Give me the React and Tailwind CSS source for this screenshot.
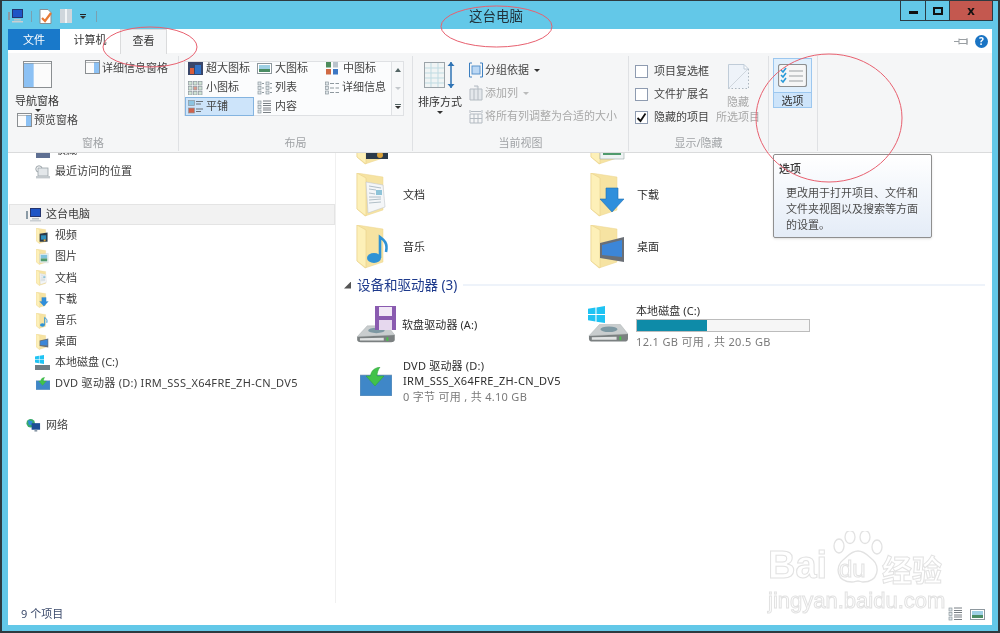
import React from "react";

const FONT = '"Noto Sans", "Noto Sans CJK SC", sans-serif';

function Overlay({ kind }) {
  if (kind === "doc")
    return (
      <g>
        <polygon points="10,9 27,12 29,34 12,40" fill="#f4f6f8" stroke="#c3c8cc" strokeWidth="0.6" />
        <path d="M13 13l12 2M13 16l7 1M13 20l6 1M13 24l12 0M13 27l12-1M13 30l12-1" stroke="#9fb0ba" strokeWidth="0.8" />
        <rect x="20" y="17" width="6" height="5" fill="#8ec3d8" />
      </g>
    );
  if (kind === "download")
    return <polygon points="16,15 28,15 28,26 34,26 22,39 10,26 16,26" fill="#2f8fdc" stroke="#1d6fb4" strokeWidth="0.6" />;
  if (kind === "music")
    return (
      <g>
        <ellipse cx="18" cy="33" rx="7" ry="5" fill="#2f93d5" />
        <path d="M24 33V12c4 3 8 6 6 15" fill="none" stroke="#2f93d5" strokeWidth="2.6" />
      </g>
    );
  if (kind === "desktop")
    return (
      <g>
        <polygon points="10,18 34,12 34,37 10,33" fill="#6a6f76" />
        <polygon points="12,20 32,15 32,32 12,30" fill="#3c86d8" />
      </g>
    );
  if (kind === "video")
    return (
      <g>
        <polygon points="10,16 32,12 32,38 10,38" fill="#2b3a4a" />
        <rect x="14" y="20" width="14" height="12" fill="#2e8fbe" />
        <circle cx="24" cy="34" r="3" fill="#d9a13a" />
      </g>
    );
  if (kind === "picture")
    return (
      <g>
        <polygon points="10,14 34,12 34,38 10,38" fill="#eef3f3" stroke="#9aa7a9" strokeWidth="0.6" />
        <rect x="13" y="16" width="18" height="10" fill="#7fc2dc" />
        <rect x="13" y="26" width="18" height="8" fill="#4f9a6c" />
      </g>
    );
  return null;
}

function Folder({ kind, w = 36, h = 44 }) {
  return (
    <svg width={w} height={h} viewBox="0 0 36 44" className="shrink-0">
      <polygon points="1,0 27,4 27,37 9,43 1,36" fill="#f6e3a2" stroke="#ecd48e" strokeWidth="0.5" />
      <polygon points="1,0 10,5 10,43 1,36" fill="#fdf0b8" stroke="#e9d08a" strokeWidth="0.6" />
      <Overlay kind={kind} />
    </svg>
  );
}

function PcIcon() {
  return (
    <svg width="16" height="14" viewBox="0 0 16 14" className="shrink-0">
      <rect x="0" y="3" width="2" height="8" fill="#8a9aa5" />
      <rect x="4" y="0" width="11" height="9" fill="#24346e" />
      <rect x="5" y="1" width="9" height="7" fill="#1f55c6" />
      <rect x="6" y="10" width="7" height="1.5" fill="#b9c1c8" />
      <rect x="4" y="12" width="11" height="1.5" fill="#c9ced2" />
    </svg>
  );
}

function RecentIcon() {
  return (
    <svg width="16" height="14" viewBox="0 0 16 14" className="shrink-0">
      <circle cx="4" cy="4" r="3.2" fill="#fff" stroke="#9aa3a8" />
      <rect x="3" y="3" width="10" height="8" fill="#e3e7ea" stroke="#9aa3a8" strokeWidth="0.8" />
      <rect x="1" y="11" width="14" height="2.4" fill="#c3c9cd" />
    </svg>
  );
}

function WinLogo({ s = 16 }) {
  return (
    <svg width={s} height={s} viewBox="0 0 16 16" className="shrink-0">
      <polygon points="0,2.5 7,1.5 7,7.5 0,7.5" fill="#1fc3f3" />
      <polygon points="8,1.3 16,0 16,7.5 8,7.5" fill="#1fc3f3" />
      <polygon points="0,8.5 7,8.5 7,14.5 0,13.5" fill="#1fc3f3" />
      <polygon points="8,8.5 16,8.5 16,16 8,14.8" fill="#1fc3f3" />
    </svg>
  );
}

function Hdd({ w = 42, h = 24 }) {
  return (
    <svg width={w} height={h} viewBox="0 0 42 24" className="shrink-0">
      <polygon points="12,2 34,2 42,12 1,14" fill="#c9cdce" stroke="#a8aeaf" strokeWidth="0.5" />
      <ellipse cx="22" cy="7" rx="9" ry="3" fill="#7d98a2" />
      <path d="M1 14l41-2v5q0 3-4 3H5q-4 0-4-3z" fill="#7b8081" />
      <path d="M4 15.5l26-.5v3H4z" fill="#e1e3e3" />
      <rect x="33" y="14.5" width="2" height="4" fill="#49c04a" />
    </svg>
  );
}

function DvdIcon({ w = 32, h = 29 }) {
  return (
    <svg width={w} height={h} viewBox="0 0 32 29" className="shrink-0">
      <rect x="0" y="8" width="32" height="21" fill="#3f87c8" stroke="#8ba0b2" strokeWidth="0.6" />
      <path d="M20 0c-6 1-9 4-9.500 9H6l9 10 9-10h-7c0-3 1-6 3-9z" fill="#41c24a" stroke="#2f9e3a" strokeWidth="0.5" />
    </svg>
  );
}

function Pane({ side = "left", w = 15, h = 14 }) {
  const blue = side === "left" ? { x: 1, width: w / 3 } : { x: w - 1 - w / 3, width: w / 3 };
  return (
    <svg width={w} height={h} viewBox={`0 0 ${w} ${h}`} className="shrink-0">
      <rect x="0.500" y="0.500" width={w - 1} height={h - 1} fill="#fbfbfb" stroke="#8a8e91" />
      <rect x={blue.x} y="2" width={blue.width} height={h - 3} fill="#8cc1f4" />
      <line x1="1" y1="2.500" x2={w - 1} y2="2.500" stroke="#8a8e91" strokeWidth="0.6" />
    </svg>
  );
}

function ViewGlyph({ k }) {
  const g = "#8e989e";
  if (k === "xl")
    return (
      <svg width="15" height="13" viewBox="0 0 15 13"><rect width="15" height="13" fill="#39466a" /><rect x="2" y="6" width="4" height="6" fill="#d95d3a" /><rect x="7" y="3" width="6" height="9" fill="#3172c6" /></svg>
    );
  if (k === "l" || k === "tile-pic")
    return (
      <svg width="15" height="13" viewBox="0 0 15 13"><rect x="0.500" y="1.500" width="14" height="10" fill="#fff" stroke={g} /><rect x="2" y="3" width="11" height="4" fill="#9ed0e4" /><rect x="2" y="7" width="11" height="3" fill="#4a8c63" /></svg>
    );
  if (k === "m")
    return (
      <svg width="15" height="13" viewBox="0 0 15 13"><rect x="1" y="0" width="5" height="5.500" fill="#4d8c5c" /><rect x="8" y="0" width="5" height="5.500" fill="#b9c3cc" /><rect x="1" y="7" width="5" height="5.500" fill="#d06a44" /><rect x="8" y="7" width="5" height="5.500" fill="#3d78c4" /></svg>
    );
  if (k === "s")
    return (
      <svg width="15" height="14" viewBox="0 0 15 14">
        {[0, 5, 10].map((y) => [0, 5, 10].map((x) => (
          <rect key={`${x}${y}`} x={x + 0.5} y={y + 0.5} width="3.500" height="3.500" fill={x === 5 && y === 5 ? "#dc9a8c" : "#cfe2d4"} stroke={g} strokeWidth="0.7" />
        )))}
      </svg>
    );
  if (k === "list")
    return (
      <svg width="15" height="14" viewBox="0 0 15 14">
        {[1, 5.5, 10].map((y) => (
          <g key={y}><rect x="1" y={y} width="3" height="3" fill="#dfe6ea" stroke={g} strokeWidth="0.7" /><rect x="9" y={y} width="3" height="3" fill="#dfe6ea" stroke={g} strokeWidth="0.7" /><rect x="5" y={y + 1} width="2" height="1" fill={g} /><rect x="13" y={y + 1} width="2" height="1" fill={g} /></g>
        ))}
      </svg>
    );
  if (k === "detail")
    return (
      <svg width="14" height="14" viewBox="0 0 14 14">
        {[1, 5.5, 10].map((y) => (
          <g key={y}><rect x="0.500" y={y} width="3" height="3" fill="#dfe6ea" stroke={g} strokeWidth="0.7" /><rect x="5" y={y + 1} width="4" height="1" fill={g} /><rect x="10.500" y={y + 1} width="3.500" height="1" fill={g} /></g>
        ))}
      </svg>
    );
  if (k === "tile")
    return (
      <svg width="15" height="14" viewBox="0 0 15 14"><rect x="0.500" y="0.500" width="6" height="5" fill="#8bc3e0" stroke={g} strokeWidth="0.7" /><rect x="0.500" y="8" width="6" height="5" fill="#d0624c" stroke={g} strokeWidth="0.7" /><path d="M8 1.500h7M8 4h5M8 9h7M8 11.500h5" stroke="#6a7176" /></svg>
    );
  return (
    <svg width="15" height="14" viewBox="0 0 15 14">
      {[1, 5.5, 10].map((y) => (
        <g key={y}><rect x="1" y={y} width="3" height="3" fill="#dfe6ea" stroke={g} strokeWidth="0.7" /><path d={`M6 ${y}h8M6 ${y + 2.5}h8`} stroke="#6a7176" strokeWidth="0.9" /></g>
      ))}
    </svg>
  );
}

function GalleryItem({ k, label, sel }) {
  return (
    <div className={`h-[19px] flex items-center gap-[3px] pl-[2px] border ${sel ? "bg-[#cde4fa] border-[#84b4e0]" : "border-transparent"}`}>
      <ViewGlyph k={k} />
      <span className="whitespace-nowrap">{label}</span>
    </div>
  );
}

function Group({ w, label, children }) {
  return (
    <div className={`${w} shrink-0 flex flex-col border-r border-[#dfe1e4] mb-[1px]`}>
      <div className="flex-1 flex min-h-0">{children}</div>
      <div className="h-[16px] text-center text-[#a0a3a6] leading-[16px]">{label}</div>
    </div>
  );
}

function Check({ checked }) {
  return (
    <span className="w-[13px] h-[13px] border border-[#8e9bb0] bg-white shrink-0 flex items-center justify-center">
      {checked && (
        <svg width="11" height="11" viewBox="0 0 11 11"><path d="M1.500 6l3 3 5-7.500" fill="none" stroke="#111" strokeWidth="1.800" /></svg>
      )}
    </span>
  );
}

function Caret({ className = "" }) {
  return <span className={`w-0 h-0 border-x-[3px] border-x-transparent border-t-[3px] border-t-[#333] ${className}`} />;
}

function Ribbon() {
  return (
    <div className="h-[100px] bg-[#f5f6f7] border-b border-[#dadbdc] flex text-[#444] text-[11px] pt-[3px] shrink-0">
      <Group w="w-[171px]" label="窗格">
        <div className="w-[77px] pl-[7px]">
          <div className="ml-[8px] mt-[5px]"><Pane side="left" w={29} h={27} /></div>
          <div className="mt-[6px] leading-[14px] text-[#333]">导航窗格</div>
          <div className="h-[3px] flex justify-center w-[45px]"><Caret className="mt-[1px]" /></div>
          <div className="flex items-center gap-[2px] ml-[2px] mt-[1px] h-[16px]"><Pane side="right" /><span className="whitespace-nowrap">预览窗格</span></div>
        </div>
        <div className="flex items-start gap-[2px] mt-[4px] h-[16px]"><Pane side="right" /><span className="whitespace-nowrap leading-[15px]">详细信息窗格</span></div>
      </Group>
      <Group w="w-[234px]" label="布局">
        <div className="ml-[5px] mt-[5px] h-[55px] flex border border-[#dfe1e4] bg-[#fbfcfd] w-[220px]">
          <div className="grid grid-cols-[69px_68px_auto] grid-rows-[19px_19px_19px] -mt-[3px]">
            <GalleryItem k="xl" label="超大图标" />
            <GalleryItem k="l" label="大图标" />
            <GalleryItem k="m" label="中图标" />
            <GalleryItem k="s" label="小图标" />
            <GalleryItem k="list" label="列表" />
            <GalleryItem k="detail" label="详细信息" />
            <GalleryItem k="tile" label="平铺" sel />
            <GalleryItem k="content" label="内容" />
          </div>
          <div className="ml-auto w-[12px] border-l border-[#dfe1e4] flex flex-col items-center justify-between py-[6px] bg-[#f7f8f9]">
            <span className="w-0 h-0 border-x-[3px] border-x-transparent border-b-[4px] border-b-[#566]" />
            <span className="w-0 h-0 border-x-[3px] border-x-transparent border-t-[3px] border-t-[#c4c8cc]" />
            <span className="flex flex-col items-center gap-[1px]"><span className="w-[6px] h-px bg-[#566]" /><Caret /></span>
          </div>
        </div>
      </Group>
      <Group w="w-[216px]" label="当前视图">
        <div className="w-[50px] ml-[2px] flex flex-col items-center">
          <svg width="32" height="29" viewBox="0 0 32 29" className="mt-[5px] shrink-0">
            <rect x="0.500" y="1.500" width="20" height="25" fill="#f0f4f4" stroke="#9ba3a8" />
            <path d="M1 7h19M1 12h19M1 17h19M1 22h19M7 2v24M14 2v24" stroke="#bfdbe2" />
            <path d="M27 1v26" stroke="#2f74b5" strokeWidth="1.500" />
            <path d="M23.500 5L27 1l3.500 4zM23.500 23l3.500 4 3.500-4z" fill="#2f74b5" />
          </svg>
          <div className="mt-[5px] leading-[14px] text-[#333] whitespace-nowrap">排序方式</div>
          <Caret className="mt-[2px]" />
        </div>
        <div className="ml-[4px] mt-[5px] flex flex-col gap-[5px]">
          <div className="h-[18px] flex items-center gap-[2px]">
            <svg width="14" height="16" viewBox="0 0 14 16" className="shrink-0"><path d="M3 1H.500v14H3M11 1h2.500v14H11" fill="none" stroke="#3c7fc0" /><rect x="3" y="4" width="8" height="8" fill="#bcd8f4" stroke="#5b93cc" /></svg>
            <span>分组依据</span>
            <Caret className="ml-[3px]" />
          </div>
          <div className="h-[18px] flex items-center gap-[2px] text-[#a8a8a8]">
            <svg width="14" height="16" viewBox="0 0 14 16" className="shrink-0"><path d="M1 4h12v11H1zM5 4v11M9 4v11M5 1h4v3" fill="#e4e8ec" stroke="#b4bbc2" /></svg>
            <span>添加列</span>
            <Caret className="ml-[3px] opacity-30" />
          </div>
          <div className="h-[18px] flex items-center gap-[2px] text-[#a8a8a8]">
            <svg width="14" height="15" viewBox="0 0 14 15" className="shrink-0"><path d="M1 5h12v9H1zM5 5v9M9 5v9M1 9.500h12M1 1v3M13 1v3M2 2.500h10" fill="none" stroke="#b4bbc2" /></svg>
            <span className="whitespace-nowrap">将所有列调整为合适的大小</span>
          </div>
        </div>
      </Group>
      <Group w="w-[140px]" label="显示/隐藏">
        <div className="w-[87px] pl-[6px] pt-[7px] flex flex-col gap-[6px] shrink-0">
          {[["项目复选框"], ["文件扩展名"], ["隐藏的项目", true]].map(([t, c]) => (
            <div key={t} className="h-[17px] flex items-center gap-[6px] whitespace-nowrap"><Check checked={c} /><span>{t}</span></div>
          ))}
        </div>
        <div className="w-[44px] flex flex-col items-center text-[#a8a8a8]">
          <svg width="21" height="25" viewBox="0 0 21 25" className="mt-[8px] shrink-0">
            <path d="M.500 24.500V.500H16l4.500 4.500v19.500z" fill="#eef3f9" />
            <path d="M.500 24.500V.500H16" fill="none" stroke="#c0ccd8" />
            <path d="M20.500 5v19.500H.500" fill="none" stroke="#aab4be" strokeDasharray="1.500 2" />
            <path d="M20 5L1 24" stroke="#cfd6dd" />
            <path d="M16 .500V5h4.500z" fill="#fff" stroke="#c0ccd8" />
          </svg>
          <div className="leading-[14px] mt-[6px]">隐藏</div>
          <div className="leading-[14px] mt-[1px] whitespace-nowrap">所选项目</div>
        </div>
      </Group>
      <Group w="w-[49px]" label="">
        <div className="ml-[4px] mt-[2px] w-[39px] h-[50px] flex flex-col">
          <div className="h-[35px] bg-[#e0effc] border border-[#9cc7ef] flex items-center justify-center">
            <svg width="29" height="23" viewBox="0 0 29 23"><rect x="0.500" y="0.500" width="28" height="22" rx="2" fill="#f6f6f6" stroke="#8d8f90" strokeWidth="1.200" /><path d="M11 7h14M11 12h14M11 17h14" stroke="#9a9fa2" /><path d="M3 6l2 2 3-4M3 11l2 2 3-4M3 16l2 2 3-4" fill="none" stroke="#2a9ad8" strokeWidth="1.600" /></svg>
          </div>
          <div className="h-[16px] -mt-px bg-[#cde4fa] border border-[#9cc7ef] text-center leading-[15px] text-[#333]">选项</div>
        </div>
      </Group>
    </div>
  );
}

function SideRow({ icon, children, child, sel, h = "h-[21px]" }) {
  return (
    <div className={`${h} flex items-center shrink-0 ${child ? "pl-[27px]" : sel ? "pl-[16px]" : "pl-[18px]"} gap-[5px] whitespace-nowrap ${sel ? "bg-[#f2f2f2] border border-[#e4e4e4] ml-px" : ""}`}>
      <span className="w-[15px] flex justify-center">{icon}</span>
      <span>{children}</span>
    </div>
  );
}

function Sidebar() {
  const f = (k) => <Folder kind={k} w={13} h={16} />;
  return (
    <div className="w-[328px] shrink-0 border-r border-[#f0f0f0] overflow-hidden flex flex-col text-[11px] text-[#3d3d3d]">
      <div className="-mt-[13px]">
        <SideRow child icon={<span className="w-[14px] h-[14px] bg-[#5e6f92] block" />}>收藏</SideRow>
      </div>
      <SideRow child icon={<RecentIcon />}>最近访问的位置</SideRow>
      <div className="h-[22px] shrink-0" />
      <SideRow sel icon={<PcIcon />}>这台电脑</SideRow>
      <SideRow child icon={f("video")}>视频</SideRow>
      <SideRow child icon={f("picture")}>图片</SideRow>
      <SideRow child h="h-[22px]" icon={f("doc")}>文档</SideRow>
      <SideRow child icon={f("download")}>下载</SideRow>
      <SideRow child icon={f("music")}>音乐</SideRow>
      <SideRow child icon={f("desktop")}>桌面</SideRow>
      <SideRow child icon={<span className="relative block w-[15px] h-[15px]"><WinLogo s={9} /><span className="absolute left-0 bottom-0 w-[15px] h-[5px] bg-[#6f7d84] block" /></span>}>本地磁盘 (C:)</SideRow>
      <SideRow child icon={<DvdIcon w={14} h={13} />}><span className="tracking-[0.3px]">DVD 驱动器 (D:) IRM_SSS_X64FRE_ZH-CN_DV5</span></SideRow>
      <div className="h-[21px] shrink-0" />
      <SideRow icon={
        <svg width="16" height="15" viewBox="0 0 16 15"><circle cx="5" cy="5" r="4.500" fill="#39a96b" /><path d="M2 2l5 1-1 4-3 0z" fill="#2b8ed8" /><rect x="6" y="5" width="9" height="7" fill="#1d4f96" /><rect x="9" y="12" width="3" height="2" fill="#8a98a6" /></svg>
      }>网络</SideRow>
    </div>
  );
}

function FolderCell({ kind, label }) {
  return (
    <div className="w-[234px] h-[52px] shrink-0 flex items-center">
      <span className="w-[47px] flex"><Folder kind={kind} /></span>
      <span className="text-[11px] text-[#2e2e2e]">{label}</span>
    </div>
  );
}

function Main() {
  return (
    <div className="flex-1 min-w-0 overflow-hidden pl-[8px] text-[11px] text-[#333]">
      <div className="pl-[12px] -mt-[36px]">
        <div className="flex"><FolderCell kind="video" label="视频" /><FolderCell kind="picture" label="图片" /></div>
        <div className="flex"><FolderCell kind="doc" label="文档" /><FolderCell kind="download" label="下载" /></div>
        <div className="flex"><FolderCell kind="music" label="音乐" /><FolderCell kind="desktop" label="桌面" /></div>
      </div>
      <div className="h-[20px] mt-[2px] flex items-center">
        <span className="w-[7px] h-[7px] [clip-path:polygon(100%_0,100%_100%,0_100%)] bg-[#555] mr-[6px] shrink-0" />
        <span className="text-[13.5px] text-[#1e3a8c] whitespace-nowrap leading-[20px]">设备和驱动器 (3)</span>
        <span className="flex-1 h-[2px] bg-[#eef3fa] ml-[6px] mr-[7px]" />
      </div>
      <div className="pl-[10px] mt-[6px] flex h-[49px]">
        <div className="w-[234px] shrink-0 flex items-center">
          <span className="w-[48px] relative h-[40px] block">
            <span className="absolute left-[0px] bottom-[0px]"><Hdd w={43} h={22} /></span>
            <svg width="21" height="24" viewBox="0 0 21 24" className="absolute left-[21px] top-0"><rect width="21" height="24" fill="#8a5bb0" /><rect x="4" y="1" width="13" height="9" fill="#f1e8f6" /><rect x="4" y="14" width="13" height="10" fill="#e6d8ee" /></svg>
          </span>
          <span className="text-[#2e2e2e] tracking-[0.1px]">软盘驱动器 (A:)</span>
        </div>
        <div className="flex items-center">
          <span className="w-[47px] relative h-[40px] block">
            <span className="absolute left-0 top-0"><WinLogo s={17} /></span>
            <span className="absolute left-0 bottom-0"><Hdd w={40} h={24} /></span>
          </span>
          <div className="flex flex-col ml-px mt-[2px]">
            <span className="leading-[15px] text-[#2e2e2e] tracking-[0.1px]">本地磁盘 (C:)</span>
            <div className="w-[174px] h-[13px] mt-[1px] border border-[#bcbcbc] bg-[#f6f6f6]"><div className="h-full bg-[#0e8ba8] w-[70px]" /></div>
            <span className="leading-[17px] mt-[1px] text-[#7a7a7a] whitespace-nowrap tracking-[0.35px]">12.1 GB 可用 , 共 20.5 GB</span>
          </div>
        </div>
      </div>
      <div className="pl-[16px] mt-[6px] flex items-center h-[50px]">
        <span className="w-[42px] flex"><DvdIcon /></span>
        <div className="flex flex-col leading-[15.5px] ml-px">
          <span className="text-[#2e2e2e] tracking-[0.2px]">DVD 驱动器 (D:)</span>
          <span className="text-[#2e2e2e] tracking-[0.33px]">IRM_SSS_X64FRE_ZH-CN_DV5</span>
          <span className="text-[#7a7a7a] tracking-[0.3px]">0 字节 可用 , 共 4.10 GB</span>
        </div>
      </div>
    </div>
  );
}

function Watermark() {
  const stroke = "text-white [-webkit-text-stroke:1px_#e2e2e2]";
  return (
    <div className="absolute left-[766px] top-[530px] w-[190px] h-[82px] pointer-events-none">
      <span className={`absolute left-0 top-[12px] text-[38px] leading-[44px] font-bold ${stroke}`} style={{ fontFamily: '"Liberation Sans", sans-serif' }}>Bai</span>
      <svg width="60" height="56" viewBox="0 0 60 56" className="absolute left-[62px] top-0">
        <g fill="#fff" stroke="#e2e2e2" strokeWidth="1.300">
          <ellipse cx="9" cy="15" rx="5" ry="7" />
          <ellipse cx="20" cy="6" rx="5" ry="6.500" />
          <ellipse cx="35" cy="6" rx="5" ry="6.500" />
          <ellipse cx="47" cy="16" rx="5" ry="7" />
          <path d="M28 20c7 0 10 5 15 9 7 6 6 22-10 22-2 0-3-1-5-1s-3 1-6 1C6 51 5 35 13 29c5-4 8-9 15-9z" />
        </g>
      </svg>
      <span className={`absolute left-[71px] top-[25px] text-[24px] leading-[26px] ${stroke}`} style={{ fontFamily: '"Liberation Sans", sans-serif' }}>du</span>
      <span className={`absolute left-[114px] top-[22px] text-[30px] leading-[34px] font-bold ${stroke}`}>经验</span>
      <span className={`absolute left-0 top-[57px] text-[22px] leading-[26px] whitespace-nowrap ${stroke}`} style={{ fontFamily: '"Liberation Sans", sans-serif' }}>jingyan.baidu.com</span>
    </div>
  );
}

export default function App() {
  return (
    <div className="relative w-[1000px] h-[633px] overflow-hidden flex flex-col border-t border-x-2 border-b-2 border-[#2e3a40] bg-[#63c8e8] px-[6px] pb-[6px] blur-[0.4px]" style={{ fontFamily: FONT }}>
      <div className="h-[28px] shrink-0 grid grid-cols-3 items-start">
        <div className="flex items-center gap-[7px] h-[26px] mt-[2px]">
          <PcIcon />
          <span className="w-px h-[11px] bg-[#7aa0b0]" />
          <svg width="14" height="15" viewBox="0 0 14 15"><path d="M1 .500h8l3 3v11H1z" fill="#fff" stroke="#8a8f92" /><path d="M3 9l3 3 6-8" fill="none" stroke="#e87a35" strokeWidth="2.200" /></svg>
          <svg width="12" height="14" viewBox="0 0 12 14"><rect x="0" y="0" width="12" height="14" fill="#cfd6dc" /><rect x="5" y="0" width="2" height="14" fill="#f1f4f6" /></svg>
          <span className="flex flex-col items-center gap-[1px] ml-px"><span className="w-[6px] h-px bg-[#222]" /><Caret /></span>
          <span className="w-px h-[11px] bg-[#7aa0b0] ml-[3px]" />
        </div>
        <div className="text-center text-[13.5px] text-[#22333c] leading-[30px] pr-[8px]">这台电脑</div>
        <div className="flex justify-end -mr-[1px]">
          <div className="flex h-[20px] border border-t-0 border-[#2b3b44]">
            <span className="w-[25px] border-r border-[#2b3b44] flex items-center justify-center"><span className="w-[9px] h-[3px] bg-[#111] mt-[3px]" /></span>
            <span className="w-[24px] border-r border-[#2b3b44] flex items-center justify-center"><span className="w-[10px] h-[8px] border-2 border-[#111]" /></span>
            <span className="w-[42px] bg-[#c4584f] flex items-center justify-center text-[13px] font-bold text-[#111] leading-none">x</span>
          </div>
        </div>
      </div>
      <div className="flex-1 min-h-0 bg-white flex flex-col">
        <div className="h-[24px] shrink-0 flex items-start text-[11px] text-[#333]">
          <div className="w-[52px] h-[21px] bg-[#1979ca] text-white text-center leading-[21px]">文件</div>
          <div className="w-[60px] h-[24px] text-center leading-[21px]">计算机</div>
          <div className="w-[47px] h-[25px] bg-[#f5f6f7] border-x border-t border-[#dadbdc] text-center leading-[21px] relative">查看</div>
          <div className="ml-auto flex items-center gap-[6px] h-[24px] pr-[4px]">
            <svg width="15" height="9" viewBox="0 0 15 9"><path d="M0 4.500h5M5 1.500v6M5 2.500h8v4H5M13 1v7" fill="none" stroke="#9a9fa3" /></svg>
            <span className="w-[13px] h-[13px] rounded-full bg-[#1a74c4] text-white text-[10px] font-bold leading-[13px] text-center">?</span>
          </div>
        </div>
        <Ribbon />
        <div className="flex-1 min-h-0 flex">
          <Sidebar />
          <Main />
        </div>
        <div className="h-[22px] shrink-0 flex items-center pl-[13px] pr-[7px] text-[11px] text-[#3b4a6b]">
          <span>9 个项目</span>
          <span className="ml-auto flex gap-[7px] items-center">
            <ViewGlyph k="content" />
            <ViewGlyph k="l" />
          </span>
        </div>
      </div>

      <div className="absolute left-[771px] top-[153px] w-[159px] h-[84px] rounded-[2px] border border-[#8f8f8f] bg-gradient-to-b from-white to-[#e4ecf7] shadow-sm text-[11px] text-[#4c4c4c] pl-[5px] pt-[6px]">
        <div className="font-medium leading-[15px] text-[#3c3c3c]">选项</div>
        <div className="pl-[7px] pt-[9px] leading-[16px]">
          <div>更改用于打开项目、文件和</div>
          <div>文件夹视图以及搜索等方面</div>
          <div>的设置。</div>
        </div>
      </div>

      <Watermark />

      <svg width="1000" height="633" className="absolute -left-[2px] -top-px pointer-events-none">
        <g fill="none" stroke="#e8606f" strokeWidth="1">
          <ellipse cx="150" cy="47" rx="47" ry="20" />
          <ellipse cx="496.500" cy="26.500" rx="55.500" ry="20.500" />
          <ellipse cx="829" cy="118" rx="73" ry="64" />
        </g>
      </svg>
    </div>
  );
}
